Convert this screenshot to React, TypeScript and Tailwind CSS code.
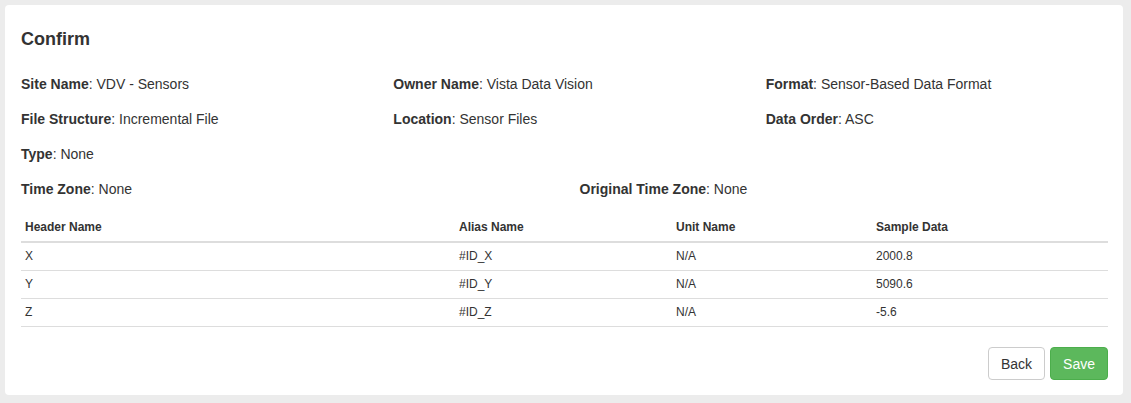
import React from 'react';

interface Field {
    label: string;
    value: string;
}

interface Row {
    header: string;
    alias: string;
    unit: string;
    sample: string;
}

const topFields: Field[][] = [
    [
        { label: 'Site Name', value: 'VDV - Sensors' },
        { label: 'Owner Name', value: 'Vista Data Vision' },
        { label: 'Format', value: 'Sensor-Based Data Format' },
    ],
    [
        { label: 'File Structure', value: 'Incremental File' },
        { label: 'Location', value: 'Sensor Files' },
        { label: 'Data Order', value: 'ASC' },
    ],
];

const rows: Row[] = [
    { header: 'X', alias: '#ID_X', unit: 'N/A', sample: '2000.8' },
    { header: 'Y', alias: '#ID_Y', unit: 'N/A', sample: '5090.6' },
    { header: 'Z', alias: '#ID_Z', unit: 'N/A', sample: '-5.6' },
];

function Info({ label, value }: Field) {
    return (
        <div className="h-[20px] leading-[20px]">
            <span className="font-bold">{label}</span>: {value}
        </div>
    );
}

export default function App() {
    return (
        <div
            className="min-h-screen bg-[#ececec] pt-[5px] pl-[5px] pr-[8px] pb-[8px] text-[14px] text-[#333333]"
            style={{ fontFamily: '"Liberation Sans", Arial, sans-serif' }}
        >
            <div className="bg-white rounded-[4px] pt-[24px] pl-[16px] pr-[15px] pb-[15px]">
                <h3 className="text-[18px] leading-[20px] font-bold">Confirm</h3>

                <div className="mt-[25px] flex flex-col gap-[15px]">
                    {topFields.map((line, i) => (
                        <div key={i} className="grid grid-cols-3 gap-x-[30px]">
                            {line.map((f) => (
                                <Info key={f.label} {...f} />
                            ))}
                        </div>
                    ))}
                    <div className="grid grid-cols-3 gap-x-[30px]">
                        <Info label="Type" value="None" />
                    </div>
                    <div className="grid grid-cols-2 gap-x-[30px]">
                        <Info label="Time Zone" value="None" />
                        <Info label="Original Time Zone" value="None" />
                    </div>
                </div>

                <table className="mt-[15px] w-full table-fixed border-collapse text-[12px]">
                    <colgroup>
                        <col className="w-[434px]" />
                        <col className="w-[217px]" />
                        <col className="w-[200px]" />
                        <col />
                    </colgroup>
                    <thead>
                        <tr className="border-b-2 border-[#dddddd]">
                            <th className="text-left font-bold px-[4px] py-[5px] leading-[17px]">Header Name</th>
                            <th className="text-left font-bold px-[4px] py-[5px] leading-[17px]">Alias Name</th>
                            <th className="text-left font-bold px-[4px] py-[5px] leading-[17px]">Unit Name</th>
                            <th className="text-left font-bold px-[4px] py-[5px] leading-[17px]">Sample Data</th>
                        </tr>
                    </thead>
                    <tbody>
                        {rows.map((r) => (
                            <tr key={r.header} className="border-b border-[#dddddd]">
                                <td className="px-[4px] py-[5px] leading-[17px]">{r.header}</td>
                                <td className="px-[4px] py-[5px] leading-[17px]">{r.alias}</td>
                                <td className="px-[4px] py-[5px] leading-[17px]">{r.unit}</td>
                                <td className="px-[4px] py-[5px] leading-[17px]">{r.sample}</td>
                            </tr>
                        ))}
                    </tbody>
                </table>

                <div className="mt-[20px] flex justify-end gap-[5px]">
                    <button className="h-[33px] px-[12px] border border-[#cccccc] rounded-[4px] bg-white text-[#333333] leading-[20px]">
                        Back
                    </button>
                    <button className="h-[33px] px-[12px] border border-[#4cae4c] rounded-[4px] bg-[#5cb85c] text-white leading-[20px]">
                        Save
                    </button>
                </div>
            </div>
        </div>
    );
}
